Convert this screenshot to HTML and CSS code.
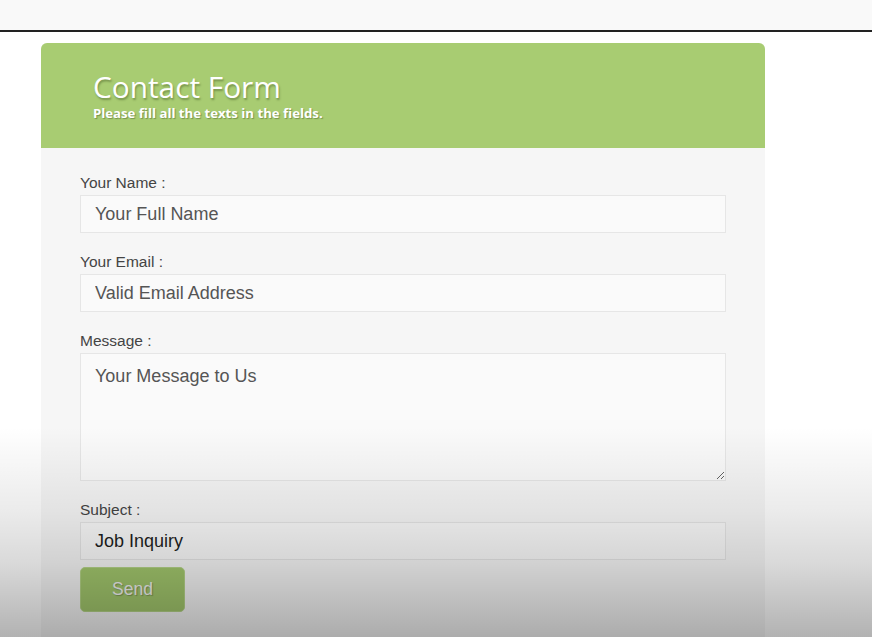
FILE: index.html
```html
<!DOCTYPE html>
<html lang="en">
<head>
<meta charset="utf-8">
<title>Contact Form</title>
<link rel="stylesheet" href="styles.css">
</head>
<body>
<div class="topbar"></div>
<main class="page">
  <section class="card">
    <header class="card-head">
      <h1 class="title">Contact Form</h1>
      <p class="subtitle">Please fill all the texts in the fields.</p>
    </header>
    <form class="card-body">
      <label class="label" for="name">Your Name :</label>
      <input class="field" id="name" type="text" placeholder="Your Full Name">
      <label class="label" for="email">Your Email :</label>
      <input class="field" id="email" type="text" placeholder="Valid Email Address">
      <label class="label" for="msg">Message :</label>
      <textarea class="field area" id="msg" placeholder="Your Message to Us"></textarea>
      <label class="label" for="subject">Subject :</label>
      <input class="field filled" id="subject" type="text" value="Job Inquiry">
      <button class="send" type="button">Send</button>
    </form>
  </section>
</main>
<div class="shade"></div>
</body>
</html>
```

FILE: styles.css
```css
html, body {
  margin: 0;
  padding: 0;
  height: 100%;
  overflow: hidden;
  background: #ffffff;
  font-family: "Liberation Sans", Arial, sans-serif;
}

.topbar {
  height: 30px;
  background: #f9f9f9;
  border-bottom: 2px solid #222;
}

.page {
  padding: 11px 0 0 41px;
}

.card {
  width: 724px;
  min-height: 600px;
  background: #f6f6f6;
  border-radius: 6px 6px 0 0;
}

.card-head {
  height: 105px;
  box-sizing: border-box;
  background: #a8cc72;
  border-radius: 6px 6px 0 0;
  padding: 26px 0 0 52px;
  color: #fff;
  font-family: "Open Sans", "DejaVu Sans", sans-serif;
}

.title {
  margin: 0;
  font-size: 29.8px;
  font-weight: 400;
  line-height: 36px;
  text-shadow: 1px 2px 2px rgba(60, 80, 30, 0.45);
}

.subtitle {
  margin: 0;
  font-size: 13.2px;
  font-weight: 700;
  line-height: 16px;
  text-shadow: 1px 1px 1px rgba(60, 80, 30, 0.45);
}

.card-body {
  display: flex;
  flex-direction: column;
  padding: 26px 39px 0 39px;
}

.label {
  font-size: 15.5px;
  line-height: 18px;
  color: #444;
  margin-bottom: 3px;
}

.field {
  box-sizing: border-box;
  height: 38px;
  margin: 0 0 20px 0;
  padding: 0 14px;
  border: 1px solid #e6e6e6;
  background: #fafafa;
  font-family: "Liberation Sans", Arial, sans-serif;
  font-size: 18px;
  color: #222;
  outline: none;
}

.field::placeholder {
  color: #555;
  opacity: 1;
}

.area {
  height: 128px;
  padding-top: 12px;
  resize: both;
}

.filled {
  margin-bottom: 7px;
  color: #1e1e1e;
}

.send {
  width: 105px;
  height: 45px;
  background: #a3c86d;
  border: 1px solid #b5d488;
  border-radius: 5px;
  color: #f4f4f4;
  font-family: "Liberation Sans", Arial, sans-serif;
  font-size: 17.5px;
  text-shadow: 1px 1px 1px rgba(0, 0, 0, 0.25);
  cursor: pointer;
}

.shade {
  position: absolute;
  left: 0;
  right: 0;
  bottom: 0;
  height: 210px;
  pointer-events: none;
  background: linear-gradient(to bottom,
    rgba(0, 0, 0, 0) 0%,
    rgba(0, 0, 0, 0.04) 20%,
    rgba(0, 0, 0, 0.08) 40%,
    rgba(0, 0, 0, 0.15) 65%,
    rgba(0, 0, 0, 0.3) 100%);
}
```
